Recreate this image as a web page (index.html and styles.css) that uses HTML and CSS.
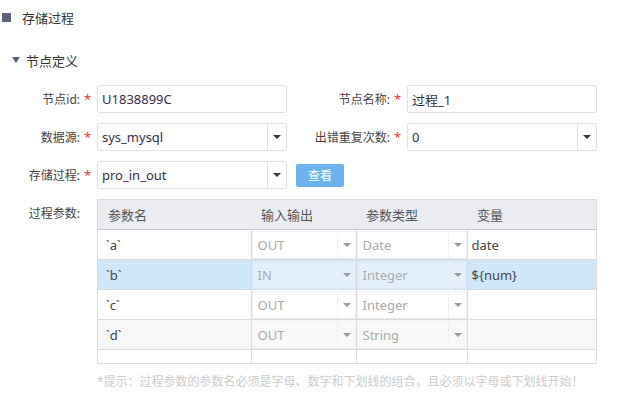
FILE: index.html
```html
<!DOCTYPE html>
<html>
<head>
  <meta charset="utf-8">
  <title>存储过程</title>
  <link rel="stylesheet" href="styles.css">
</head>
<body>
  <div class="header">
    <span class="square"></span>
    <span class="header-title">存储过程</span>
  </div>

  <div class="section-title">
    <span class="caret"></span>
    <span>节点定义</span>
  </div>

  <div class="form">
    <div class="form-row">
      <div class="field">
        <label class="label">节点id:</label>
        <span class="star">*</span>
        <div class="input">U1838899C</div>
      </div>
      <div class="field field-right">
        <label class="label">节点名称:</label>
        <span class="star">*</span>
        <div class="input">过程_1</div>
      </div>
    </div>

    <div class="form-row">
      <div class="field">
        <label class="label">数据源:</label>
        <span class="star">*</span>
        <div class="input select">
          <span class="select-value">sys_mysql</span>
          <span class="select-arrow"><i class="tri"></i></span>
        </div>
      </div>
      <div class="field field-right">
        <label class="label">出错重复次数:</label>
        <span class="star">*</span>
        <div class="input select">
          <span class="select-value">0</span>
          <span class="select-arrow"><i class="tri"></i></span>
        </div>
      </div>
    </div>

    <div class="form-row">
      <div class="field">
        <label class="label">存储过程:</label>
        <span class="star">*</span>
        <div class="input select">
          <span class="select-value">pro_in_out</span>
          <span class="select-arrow"><i class="tri"></i></span>
        </div>
      </div>
      <button class="btn">查看</button>
    </div>

    <div class="params">
      <label class="label params-label">过程参数:</label>
      <span class="star"></span>
      <div>
        <table class="grid">
          <thead>
            <tr>
              <th class="c1">参数名</th>
              <th class="c2">输入输出</th>
              <th class="c3">参数类型</th>
              <th class="c4">变量</th>
            </tr>
          </thead>
          <tbody>
            <tr>
              <td class="name">`a`</td>
              <td class="sel-cell"><div class="cell-select"><span>OUT</span><i class="cell-arrow"></i></div></td>
              <td class="sel-cell"><div class="cell-select"><span>Date</span><i class="cell-arrow"></i></div></td>
              <td class="var">date</td>
            </tr>
            <tr class="selected">
              <td class="name">`b`</td>
              <td class="sel-cell"><div class="cell-select"><span>IN</span><i class="cell-arrow"></i></div></td>
              <td class="sel-cell"><div class="cell-select"><span>Integer</span><i class="cell-arrow"></i></div></td>
              <td class="var">${num}</td>
            </tr>
            <tr>
              <td class="name">`c`</td>
              <td class="sel-cell"><div class="cell-select"><span>OUT</span><i class="cell-arrow"></i></div></td>
              <td class="sel-cell"><div class="cell-select"><span>Integer</span><i class="cell-arrow"></i></div></td>
              <td class="var"></td>
            </tr>
            <tr class="striped">
              <td class="name">`d`</td>
              <td class="sel-cell"><div class="cell-select"><span>OUT</span><i class="cell-arrow"></i></div></td>
              <td class="sel-cell"><div class="cell-select"><span>String</span><i class="cell-arrow"></i></div></td>
              <td class="var"></td>
            </tr>
            <tr class="empty">
              <td></td><td></td><td></td><td></td>
            </tr>
          </tbody>
        </table>
        <div class="hint">*提示：过程参数的参数名必须是字母、数字和下划线的组合，且必须以字母或下划线开始！</div>
      </div>
    </div>
  </div>
</body>
</html>
```

FILE: styles.css
```css
:root {
  --font: "Noto Sans", "Noto Sans CJK SC", sans-serif;
  --text: #333333;
  --label: #444444;
  --border: #dbe2ea;
  --required: #e53935;
  --grid-border: #dcdcdc;
}

body {
  margin: 0;
  background: #ffffff;
  color: var(--text);
  font-family: var(--font);
  font-size: 13px;
}

.header {
  display: flex;
  align-items: center;
  height: 34px;
  padding-left: 2px;
}

.square {
  width: 9px;
  height: 9px;
  background: #5e617c;
  margin-right: 11px;
}

.header-title {
  font-size: 13px;
  color: #333;
}

.section-title {
  display: flex;
  align-items: center;
  height: 20px;
  margin-top: 16px;
  padding-left: 12px;
  font-size: 13px;
  color: #333;
}

.caret {
  width: 0;
  height: 0;
  border-left: 4px solid transparent;
  border-right: 4px solid transparent;
  border-top: 6px solid #5e617c;
  margin-right: 6px;
}

/* form */
.form {
  margin-top: 15px;
}

.form-row {
  display: flex;
  align-items: center;
  margin-bottom: 10px;
}

.field {
  display: flex;
  align-items: center;
}

.label {
  width: 82px;
  text-align: right;
  font-size: 12px;
  color: var(--label);
  padding-right: 2px;
  box-sizing: border-box;
}

.field-right .label {
  width: 105px;
}

.star {
  width: 15px;
  color: var(--required);
  font-size: 13px;
  text-align: left;
  padding-left: 2px;
  box-sizing: border-box;
}

.input {
  width: 190px;
  height: 28px;
  box-sizing: border-box;
  border: 1px solid var(--border);
  border-radius: 2px;
  display: flex;
  align-items: center;
  padding-left: 4px;
  font-size: 13px;
  color: #34304a;
}

.select {
  padding-left: 0;
}

.select-value {
  flex: 1;
  padding-left: 4px;
}

.select-arrow {
  width: 18px;
  height: 100%;
  border-left: 1px solid var(--border);
  display: flex;
  align-items: center;
  justify-content: center;
}

.tri {
  width: 0;
  height: 0;
  border-left: 4px solid transparent;
  border-right: 4px solid transparent;
  border-top: 4px solid #333;
}

.btn {
  margin-left: 9px;
  width: 48px;
  height: 23px;
  border: none;
  border-radius: 2px;
  background: #6bb3ee;
  color: #fff;
  font-family: var(--font);
  font-size: 12px;
  padding: 0;
}

/* parameter grid */
.params {
  display: flex;
  align-items: flex-start;
}

.params-label {
  line-height: 30px;
}

.grid {
  border-collapse: collapse;
  border: 1px solid var(--grid-border);
  width: 500px;
  table-layout: fixed;
  font-size: 13px;
}

.grid th {
  height: 29px;
  background: #ebecf1;
  border-bottom: 1px solid #c6c9d4;
  text-align: left;
  font-weight: normal;
  color: #555;
  padding: 0 0 0 10px;
}

.grid .c1 { width: 143px; }
.grid .c2 { width: 95px; }
.grid .c3 { width: 101px; }

.grid td {
  height: 29px;
  border: 1px solid var(--grid-border);
  padding: 0;
  color: #444;
}

.grid td.name {
  padding-left: 8px;
}

.grid td.var {
  padding-left: 4px;
}

.grid tr.empty td {
  height: 13px;
}

.sel-cell {
  vertical-align: middle;
}

.cell-select {
  display: flex;
  align-items: center;
  height: 26px;
  border: 1px solid #eff1f3;
  border-bottom-color: #e2eaf2;
  background: #fff;
  color: #aaa;
}

.cell-select span {
  flex: 1;
  padding-left: 5px;
}

.cell-arrow {
  width: 17px;
  height: 100%;
  border-left: 1px solid #eff1f3;
  position: relative;
}

.cell-arrow:after {
  content: "";
  position: absolute;
  left: 5px;
  top: 11px;
  border-left: 4px solid transparent;
  border-right: 4px solid transparent;
  border-top: 4px solid #999;
}

.selected td {
  background: #d0e6f9;
}

.selected .cell-select {
  background: #e4f1fc;
  border-color: #d8eaf9;
}

.striped td {
  background: #f7f7f7;
}

.striped .cell-select {
  background: #f8f8f8;
}

.hint {
  margin-top: 8px;
  font-size: 12px;
  color: #cccccc;
}
```
